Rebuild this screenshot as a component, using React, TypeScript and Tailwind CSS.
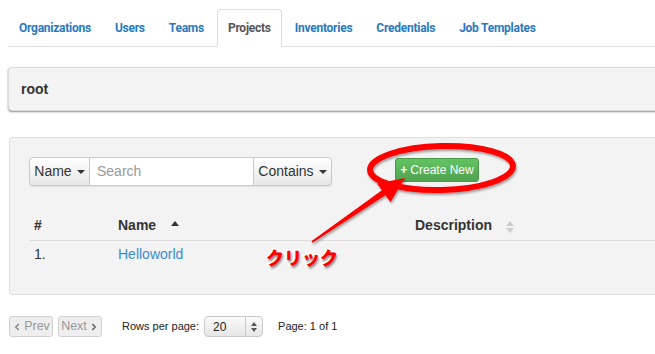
import React from "react";
import { ChevronLeft, ChevronRight } from "lucide-react";

const tabs = ["Organizations", "Users", "Teams", "Projects", "Inventories", "Credentials", "Job Templates"];

function Caret() {
  return <span className="inline-block ml-[5px] align-middle w-0 h-0 border-l-[4px] border-r-[4px] border-t-[4px] border-l-transparent border-r-transparent border-t-[#333]" />;
}

function SortBoth() {
  return (
    <svg width="8" height="12" viewBox="0 0 8 12" className="inline-block ml-[14px] align-middle">
      <path d="M4 0 L8 5 L0 5 Z" fill="#ccc" />
      <path d="M4 12 L8 7 L0 7 Z" fill="#ccc" />
    </svg>
  );
}

export default function App() {
  return (
    <div className="relative w-[655px] h-[354px] overflow-hidden bg-white text-[#333] font-['Liberation_Sans',Arial,sans-serif]">
      <div className="w-[780px]">
        {/* tabs */}
        <ul className="flex ml-[8px] mt-[9px] border-b border-[#ddd]">
          {tabs.map((t) => {
            const active = t === "Projects";
            return (
              <li
                key={t}
                className={
                  "h-[38px] -mb-px mr-[2px] px-[10px] flex items-center text-[12px] tracking-[-0.25px] font-bold font-['Roboto',sans-serif] rounded-t-[4px] border " +
                  (active
                    ? "bg-white border-[#ddd] border-b-white text-[#555]"
                    : "border-transparent text-[#2878c2]")
                }
              >
                {t}
              </li>
            );
          })}
        </ul>

        {/* breadcrumb */}
        <div className="mt-[20px] ml-[8px] h-[44px] flex items-center pl-[12px] bg-[#f4f4f4] border border-[#dcdcdc] rounded-[4px] shadow-[0_1px_2px_rgba(0,0,0,0.45)] text-[14px] font-bold text-[#333]">
          root
        </div>

        {/* list panel */}
        <div className="mt-[26px] ml-[9px] h-[158px] pt-[19px] pl-[19px] bg-[#f3f3f3] border border-[#dedede] rounded-[4px]">
          <div className="flex items-start">
            <div className="flex h-[29px] text-[14px] rounded-[4px] shadow-[0_1px_1px_rgba(0,0,0,0.08)]">
              <div className="w-[61px] flex items-center justify-center bg-gradient-to-b from-white to-[#e8e8e8] border border-[#c9c9c9] rounded-l-[4px] text-[#333]">
                Name
                <Caret />
              </div>
              <div className="w-[163px] flex items-center pl-[7px] bg-white border-y border-[#ccc] text-[#999]">
                Search
              </div>
              <div className="w-[79px] flex items-center justify-center bg-gradient-to-b from-white to-[#e8e8e8] border border-[#c9c9c9] rounded-r-[4px] text-[#333]">
                Contains
                <Caret />
              </div>
            </div>
            <div className="ml-[63px] mt-px h-[24px] w-[84px] flex items-center justify-center rounded-[3px] bg-gradient-to-b from-[#62c462] to-[#51a351] border border-[#4a9a4a] text-white text-[12px]">
              <span className="font-bold mr-[3px]">+</span>Create New
            </div>
          </div>

          <table className="mt-[26px] w-[740px] text-[14px] border-collapse">
            <thead>
              <tr className="h-[28px] border-b border-[#dcdcdc] text-left">
                <th className="w-[84px] pl-[5px] font-bold">#</th>
                <th className="w-[297px] pl-[5px] font-bold">
                  Name
                  <svg width="8" height="5" viewBox="0 0 8 5" className="inline-block ml-[15px] align-[4px]">
                    <path d="M4 0 L8 5 L0 5 Z" fill="#333" />
                  </svg>
                </th>
                <th className="pl-[5px] font-bold">
                  Description
                  <SortBoth />
                </th>
              </tr>
            </thead>
            <tbody>
              <tr className="h-[29px]">
                <td className="pl-[5px]">1.</td>
                <td className="pl-[5px] text-[#3a8bd2]">Helloworld</td>
                <td></td>
              </tr>
            </tbody>
          </table>
        </div>

        {/* pagination */}
        <div className="mt-[21px] ml-[9px] flex items-center h-[21px] text-[11px]">
          <div className="w-[44px] h-[21px] flex items-center justify-center bg-[#eee] border border-[#d0d0d0] rounded-[3px] text-[#999] text-[12.5px]">
            <ChevronLeft size={10} strokeWidth={4} className="mr-[2px] text-[#888]" />
            Prev
          </div>
          <div className="ml-[5px] w-[44px] h-[21px] flex items-center justify-center bg-[#eee] border border-[#d0d0d0] rounded-[3px] text-[#999] text-[12.5px]">
            Next
            <ChevronRight size={10} strokeWidth={4} className="ml-[2px] text-[#666]" />
          </div>
          <span className="ml-[20px] text-[#222]">Rows per page:</span>
          <div className="ml-[5px] w-[59px] h-[21px] flex items-center bg-gradient-to-b from-[#fafafa] to-[#e6e6e6] border border-[#c8c8c8] rounded-[4px] text-[#222]">
            <span className="flex-1 pl-[8px] text-[12px]">20</span>
            <div className="w-[17px] h-full border-l border-[#c8c8c8] flex items-center justify-center">
              <svg width="6" height="10" viewBox="0 0 6 10">
                <path d="M3 0 L6 4 L0 4 Z" fill="#555" />
                <path d="M3 10 L6 6 L0 6 Z" fill="#555" />
              </svg>
            </div>
          </div>
          <span className="ml-[15px] text-[#222]">Page: 1 of 1</span>
        </div>
      </div>

      {/* annotation overlays */}
      <svg className="absolute left-0 top-0 pointer-events-none" width="655" height="354" viewBox="0 0 655 354">
        <defs>
          <filter id="sh" x="-10%" y="-10%" width="130%" height="140%">
            <feDropShadow dx="1" dy="2" stdDeviation="1.2" floodColor="#000" floodOpacity="0.35" />
          </filter>
        </defs>
        <g filter="url(#sh)">
          <ellipse cx="441.5" cy="168" rx="71.5" ry="22" fill="none" stroke="#f00" strokeWidth="6" transform="rotate(-1.5 441.5 168)" />
          <polygon
            points="312.6,242.8 385.3,195.2 390.5,202 405,178 377,183.5 381.9,190.2 311.4,241.2"
            fill="#f00"
          />
        </g>
      </svg>
      <div className="absolute left-[266px] top-[245px] text-[18px] font-black leading-[24px] text-[#f00] font-['Noto_Sans_CJK_JP',sans-serif] [-webkit-text-stroke:3px_white] [paint-order:stroke_fill] [text-shadow:1px_2px_2px_rgba(0,0,0,0.45)]">
        クリック
      </div>
    </div>
  );
}
